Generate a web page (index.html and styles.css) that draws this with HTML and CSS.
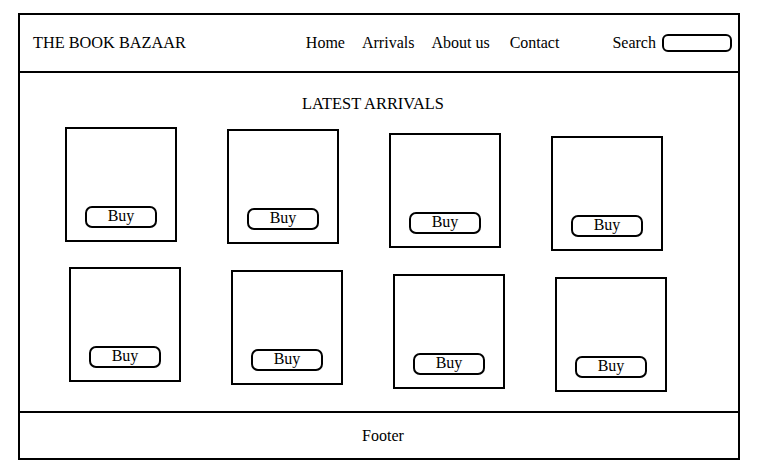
FILE: index.html
```html
<!DOCTYPE html>
<html>
<head>
<meta charset="utf-8">
<title>The Book Bazaar</title>
<link rel="stylesheet" href="styles.css">
</head>
<body>
<div class="frame">
  <header class="header">
    <div class="logo">THE BOOK BAZAAR</div>
    <nav class="nav">
      <a class="nav-link">Home</a>
      <a class="nav-link">Arrivals</a>
      <a class="nav-link">About us</a>
      <a class="nav-link contact">Contact</a>
    </nav>
    <div class="search">
      <span class="search-label">Search</span>
      <span class="search-box"></span>
    </div>
  </header>
  <main class="main">
    <h1 class="title">LATEST ARRIVALS</h1>
    <div class="grid">
      <div class="card"><span class="buy">Buy</span></div>
      <div class="card"><span class="buy">Buy</span></div>
      <div class="card"><span class="buy">Buy</span></div>
      <div class="card"><span class="buy">Buy</span></div>
      <div class="card"><span class="buy">Buy</span></div>
      <div class="card"><span class="buy">Buy</span></div>
      <div class="card"><span class="buy">Buy</span></div>
      <div class="card"><span class="buy">Buy</span></div>
    </div>
  </main>
  <footer class="footer">Footer</footer>
</div>
</body>
</html>
```

FILE: styles.css
```css
* { box-sizing: border-box; }

html, body {
  margin: 0;
  padding: 0;
  background: #fff;
}

body {
  font-family: "Liberation Serif", "Times New Roman", serif;
  font-size: 16px;
  line-height: 18px;
  color: #000;
  padding: 13px 0 0 18px;
}

.frame {
  width: 722px;
  height: 447px;
  border: 2px solid #000;
  display: flex;
  flex-direction: column;
}

.header {
  height: 58px;
  flex: none;
  border-bottom: 2px solid #000;
  display: flex;
  align-items: center;
  padding-left: 13px;
}

.logo {
  white-space: nowrap;
  font-size: 16.3px;
}

.nav {
  display: flex;
  gap: 17px;
  margin-left: 120px;
  white-space: nowrap;
}

.nav-link {
  color: #000;
  text-decoration: none;
}

.nav-link.contact {
  margin-left: 3px;
}

.search {
  display: flex;
  align-items: center;
  margin-left: 53px;
}

.search-label {
  margin-bottom: 1px;
}

.search-box {
  display: block;
  width: 70px;
  height: 18px;
  margin-left: 6px;
  border: 2px solid #000;
  border-radius: 6px;
}

.main {
  flex: 1;
  padding-top: 22px;
}

.title {
  margin: 0;
  padding-right: 12px;
  font-size: 16.4px;
  font-weight: normal;
  line-height: 18px;
  text-align: center;
}

.grid {
  margin-top: 14px;
  padding-left: 45px;
  display: grid;
  grid-template-columns: repeat(4, 112px);
  column-gap: 50px;
  row-gap: 16px;
  align-items: start;
}

.card {
  width: 112px;
  height: 115px;
  border: 2px solid #000;
  display: flex;
  flex-direction: column;
  justify-content: flex-end;
  align-items: flex-start;
}

.card:nth-child(4n+2) { margin-top: 2px; }
.card:nth-child(4n+3) { margin-top: 6px; }
.card:nth-child(4n+4) { margin-top: 9px; }
.card:nth-child(n+5) { margin-left: 4px; }
.card:nth-child(n+6) { transform: translateY(1px); }

.buy {
  display: block;
  width: 72px;
  height: 22px;
  margin: 0 0 12px 18px;
  border: 2px solid #000;
  border-radius: 7px;
  text-align: center;
  line-height: 16px;
}

.footer {
  height: 47px;
  flex: none;
  border-top: 2px solid #000;
  display: flex;
  align-items: center;
  justify-content: center;
  padding-left: 8px;
}
```
